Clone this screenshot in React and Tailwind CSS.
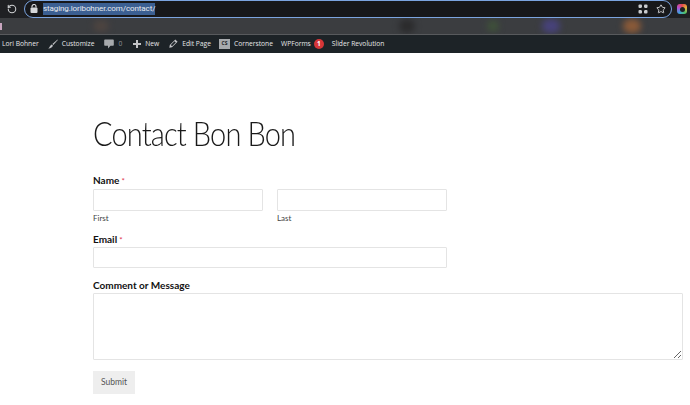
import React from "react";
import { RotateCw, Star } from "lucide-react";

function BrowserBar() {
  return (
    <div className="h-[18px] bg-[#1f2023] flex items-center pl-[7px] pr-[3px] overflow-hidden">
      <RotateCw size={10} strokeWidth={2.5} className="text-[#d0d2d4] -scale-x-100 shrink-0" />
      <div className="ml-[7px] flex-1 h-[18px] rounded-full border-[1.5px] border-[#7ba4e0] bg-[#17181b] flex items-center pl-[5px] pr-[5px] -mt-[1px]">
        <svg width="8" height="9" viewBox="0 0 8 9" className="shrink-0 text-[#d5d7da]">
          <rect x="0.5" y="3.5" width="7" height="5.5" rx="1" fill="currentColor" />
          <path d="M2 3.5V2.5a2 2 0 0 1 4 0v1" fill="none" stroke="currentColor" strokeWidth="1.2" />
        </svg>
        <span className="ml-[5px] bg-[#3b5f92] text-[#e8eaed] text-[8px] leading-[12px] font-['Roboto',sans-serif] tracking-[-0.1px]">staging.loribohner.com/contact/</span>
        <div className="ml-auto flex items-center gap-[8px]">
          <svg width="10" height="10" viewBox="0 0 10 10" className="text-[#c9cbce]">
            <rect x="0.5" y="0.5" width="3.5" height="3.5" rx="1" fill="currentColor" />
            <rect x="6" y="0.5" width="3.5" height="3.5" rx="1" fill="currentColor" />
            <rect x="0.5" y="6" width="3.5" height="3.5" rx="1" fill="currentColor" />
            <rect x="6" y="6" width="3.5" height="3.5" rx="1" fill="currentColor" />
            <rect x="3.5" y="3.5" width="3" height="3" fill="#17181b" />
          </svg>
          <Star size={10} strokeWidth={2} fill="#1f2023" className="text-[#e3e5e7]" />
        </div>
      </div>
      <div className="ml-[5px] w-[10px] h-[10px] rounded-[3px] bg-[conic-gradient(#e5484d,#e8b23a,#4cc16c,#3f9fe0,#b84fd0,#e5484d)] flex items-center justify-center shrink-0">
        <div className="w-[5px] h-[5px] rounded-full bg-[#1f2023]" />
      </div>
    </div>
  );
}

function BookmarksBar() {
  return (
    <div className="h-[17px] bg-[#3b3d40] border-b border-[#585a5d] flex items-center overflow-hidden">
      <div className="w-[2px] h-[7px] bg-[#c9a6c0] shrink-0" />
      <div className="ml-[91px] w-[16px] h-[12px] rounded-full bg-[#4d4440] blur-[3px]" />
      <div className="ml-[290px] w-[16px] h-[14px] rounded-full bg-[#2b2b2c] blur-[3px]" />
      <div className="ml-[72px] w-[12px] h-[12px] rounded-full bg-[#3f5139] blur-[3px]" />
      <div className="ml-[43px] w-[18px] h-[14px] rounded-full bg-[#47427a] blur-[3px]" />
      <div className="ml-[63px] w-[18px] h-[14px] rounded-full bg-[#8a5a38] blur-[3px]" />
    </div>
  );
}

function AdminItem({ icon, children, className = "" }) {
  return (
    <span className={`flex items-center gap-[4px] ${className}`}>
      {icon}
      {children}
    </span>
  );
}

function BrushIcon() {
  return (
    <svg width="10" height="10" viewBox="0 0 10 10" className="text-[#c3c4c7]">
      <path d="M9.6 0.4 L4.4 5 L5.3 6 L9.8 1 Z" fill="currentColor" />
      <path d="M3.6 5.4 L4.9 6.6 C4.5 8.6 2.4 9.6 0.2 9.4 C1.8 8.6 1.8 6.4 3.6 5.4 Z" fill="currentColor" />
    </svg>
  );
}

function CommentIcon() {
  return (
    <svg width="10" height="10" viewBox="0 0 10 10" className="text-[#a7aaad]">
      <path d="M1 0.5 H9 a0.8 0.8 0 0 1 0.8 0.8 V6 a0.8 0.8 0 0 1 -0.8 0.8 H6.5 L4 9.6 V6.8 H1 a0.8 0.8 0 0 1 -0.8 -0.8 V1.3 a0.8 0.8 0 0 1 0.8 -0.8 Z" fill="currentColor" />
    </svg>
  );
}

function PlusIcon() {
  return (
    <svg width="8" height="8" viewBox="0 0 8 8" className="text-[#c3c4c7]">
      <path d="M3 0 H5 V3 H8 V5 H5 V8 H3 V5 H0 V3 H3 Z" fill="currentColor" />
    </svg>
  );
}

function PencilIcon() {
  return (
    <svg width="9" height="9" viewBox="0 0 9 9" className="text-[#c3c4c7]">
      <path d="M6.3 0.4 L8.6 2.7 L3 8.2 L0.3 8.7 L0.8 6 Z" fill="currentColor" />
      <path d="M5.5 2.2 L6.8 3.5 L3 7.2 L1.8 6 Z" fill="#1d2327" />
    </svg>
  );
}

function AdminBar() {
  return (
    <div className="h-[18px] bg-[#1d2327] flex items-center pl-[2px] text-[#e6e7e8] text-[6.7px] font-medium font-['Open_Sans',sans-serif] whitespace-nowrap">
      <span>Lori Bohner</span>
      <AdminItem className="ml-[9px]" icon={<BrushIcon />}>Customize</AdminItem>
      <AdminItem className="ml-[10px] text-[#8f9397]" icon={<CommentIcon />}>0</AdminItem>
      <AdminItem className="ml-[11px]" icon={<PlusIcon />}>New</AdminItem>
      <AdminItem className="ml-[10px]" icon={<PencilIcon />}>Edit Page</AdminItem>
      <AdminItem className="ml-[8px]" icon={<span className="w-[11px] h-[10px] bg-[#a7aaad] text-[#1d2327] text-[5px] font-bold flex items-center justify-center">CS</span>}>Cornerstone</AdminItem>
      <span className="ml-[8px]">WPForms</span>
      <span className="ml-[3px] w-[10px] h-[10px] rounded-full bg-[#d63638] text-white text-[6.5px] font-bold flex items-center justify-center">1</span>
      <span className="ml-[8px]">Slider Revolution</span>
    </div>
  );
}

function Label({ children, required }) {
  return (
    <label className="block text-[10px] leading-[14px] font-bold text-[#111]">
      {children}
      {required && <span className="text-[#e0324b] font-normal text-[8px] ml-[2px]">*</span>}
    </label>
  );
}

const fieldCls = "block bg-white border border-[#e4e4e4] rounded-[1px]";

export default function App() {
  return (
    <div className="w-[690px] h-[405px] overflow-hidden bg-white font-['Lato',sans-serif]">
      <BrowserBar />
      <BookmarksBar />
      <AdminBar />
      <main className="pl-[93px] pr-[7px] pt-[58px]">
        <h1 className="text-[33px] leading-[44px] font-light text-[#1a1a1a] tracking-[-1px] origin-left scale-x-[0.88] whitespace-nowrap">Contact Bon Bon</h1>
        <form className="mt-[18px]">
          <Label required>Name</Label>
          <div className="mt-[1px] flex gap-[14px] w-[354px]">
            <div className="flex-1">
              <input className={`${fieldCls} h-[22px] w-full`} />
              <span className="block mt-[1px] text-[8px] leading-[12px] text-[#444]">First</span>
            </div>
            <div className="flex-1">
              <input className={`${fieldCls} h-[22px] w-full`} />
              <span className="block mt-[1px] text-[8px] leading-[12px] text-[#444]">Last</span>
            </div>
          </div>
          <div className="mt-[8px]">
            <Label required>Email</Label>
            <input className={`${fieldCls} h-[21px] w-[354px]`} />
          </div>
          <div className="mt-[10px]">
            <Label>Comment or Message</Label>
            <textarea className={`${fieldCls} mt-[1px] w-[590px] h-[67px]`} />
          </div>
          <button type="button" className="mt-[11px] w-[42px] h-[23px] bg-[#eeeeee] text-[#555] text-[8.5px] flex items-center justify-center">Submit</button>
        </form>
      </main>
    </div>
  );
}
